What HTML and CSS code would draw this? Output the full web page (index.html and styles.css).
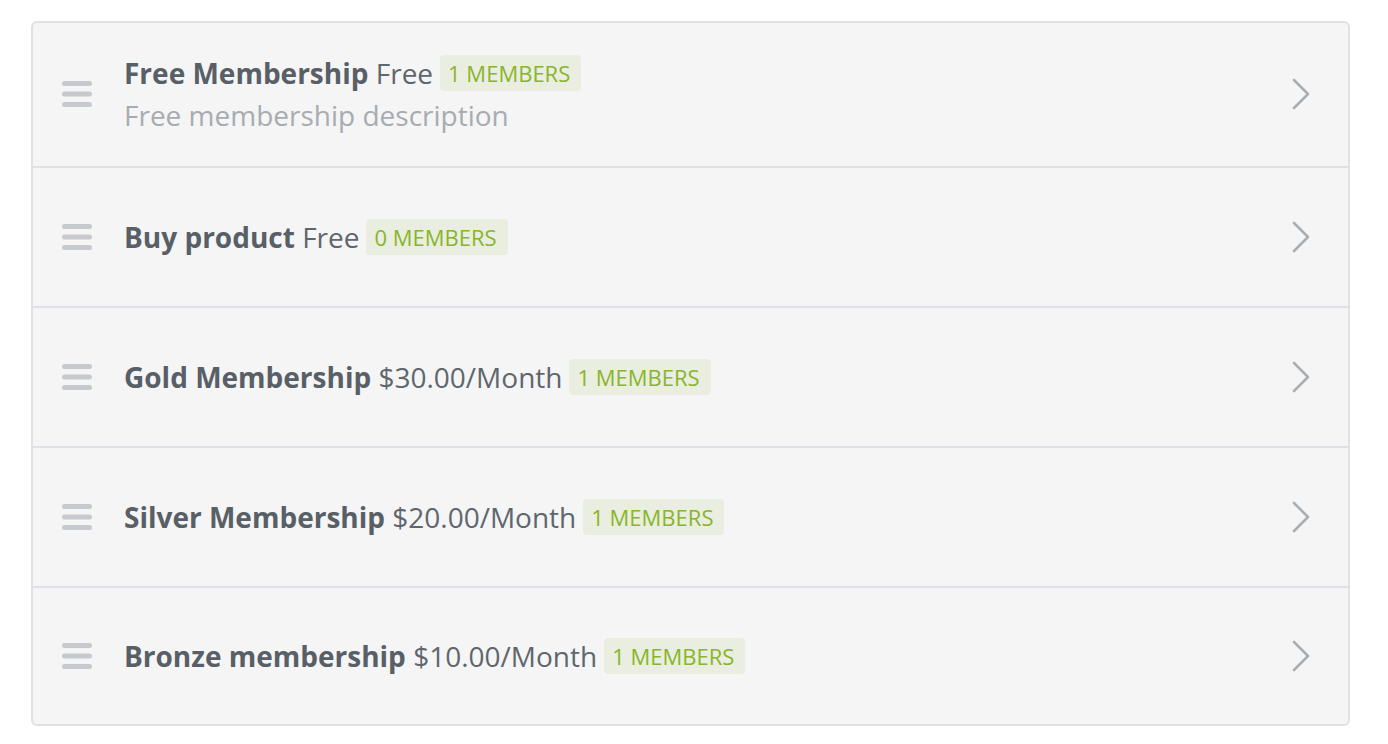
FILE: index.html
```html
<!DOCTYPE html>
<html lang="en">
<head>
<meta charset="utf-8">
<title>Memberships</title>
<link rel="stylesheet" href="styles.css">
</head>
<body>
<div class="list">
  <div class="row">
    <svg class="handle" viewBox="0 0 30 26" width="30" height="26"><rect x="0" y="0" width="30" height="5" rx="2.5"/><rect x="0" y="10.5" width="30" height="5" rx="2.5"/><rect x="0" y="21" width="30" height="5" rx="2.5"/></svg>
    <div class="info">
      <div class="title"><span class="name">Free Membership</span> <span class="price">Free</span><span class="badge">1 MEMBERS</span></div>
      <div class="desc">Free membership description</div>
    </div>
    <svg class="chev" viewBox="0 0 18 32" width="18" height="32"><path d="M2 2 L16 16 L2 30"/></svg>
  </div>
  <div class="row">
    <svg class="handle" viewBox="0 0 30 26" width="30" height="26"><rect x="0" y="0" width="30" height="5" rx="2.5"/><rect x="0" y="10.5" width="30" height="5" rx="2.5"/><rect x="0" y="21" width="30" height="5" rx="2.5"/></svg>
    <div class="info">
      <div class="title"><span class="name">Buy product</span> <span class="price">Free</span><span class="badge">0 MEMBERS</span></div>
    </div>
    <svg class="chev" viewBox="0 0 18 32" width="18" height="32"><path d="M2 2 L16 16 L2 30"/></svg>
  </div>
  <div class="row">
    <svg class="handle" viewBox="0 0 30 26" width="30" height="26"><rect x="0" y="0" width="30" height="5" rx="2.5"/><rect x="0" y="10.5" width="30" height="5" rx="2.5"/><rect x="0" y="21" width="30" height="5" rx="2.5"/></svg>
    <div class="info">
      <div class="title"><span class="name">Gold Membership</span> <span class="price">$30.00/Month</span><span class="badge">1 MEMBERS</span></div>
    </div>
    <svg class="chev" viewBox="0 0 18 32" width="18" height="32"><path d="M2 2 L16 16 L2 30"/></svg>
  </div>
  <div class="row">
    <svg class="handle" viewBox="0 0 30 26" width="30" height="26"><rect x="0" y="0" width="30" height="5" rx="2.5"/><rect x="0" y="10.5" width="30" height="5" rx="2.5"/><rect x="0" y="21" width="30" height="5" rx="2.5"/></svg>
    <div class="info">
      <div class="title"><span class="name">Silver Membership</span> <span class="price">$20.00/Month</span><span class="badge">1 MEMBERS</span></div>
    </div>
    <svg class="chev" viewBox="0 0 18 32" width="18" height="32"><path d="M2 2 L16 16 L2 30"/></svg>
  </div>
  <div class="row">
    <svg class="handle" viewBox="0 0 30 26" width="30" height="26"><rect x="0" y="0" width="30" height="5" rx="2.5"/><rect x="0" y="10.5" width="30" height="5" rx="2.5"/><rect x="0" y="21" width="30" height="5" rx="2.5"/></svg>
    <div class="info">
      <div class="title"><span class="name">Bronze membership</span> <span class="price">$10.00/Month</span><span class="badge">1 MEMBERS</span></div>
    </div>
    <svg class="chev" viewBox="0 0 18 32" width="18" height="32"><path d="M2 2 L16 16 L2 30"/></svg>
  </div>
</div>
</body>
</html>
```

FILE: styles.css
```css
* { box-sizing: border-box; }
html, body { margin: 0; padding: 0; background: #ffffff; }
body {
  font-family: "Open Sans", "Liberation Sans", sans-serif;
  padding: 21px 0 0 31px;
}
.list {
  width: 1319px;
  background: #f5f5f5;
  border: 2px solid #e1e0e6;
  border-radius: 6px;
  overflow: hidden;
}
.row {
  display: flex;
  align-items: center;
  min-height: 140px;
  padding: 29px 38px 30px 29px;
  border-bottom: 2px solid #e1e0e6;
}
.row:last-child { border-bottom: none; min-height: 136px; }
.handle { flex: none; fill: #c6c9ce; }
.info { flex: 1; margin-left: 32px; }
.title {
  font-size: 28px;
  line-height: 42px;
  color: #585f67;
}
.name { font-weight: 700; }
.price { font-weight: 400; color: #5f666e; }
.badge {
  display: inline-block;
  vertical-align: 2px;
  margin-left: 7px;
  padding: 0 11px 0 8px;
  height: 36px;
  line-height: 36px;
  font-size: 22px;
  color: #8ab52a;
  background: #e9eee0;
  border-radius: 4px;
}
.desc {
  font-size: 28px;
  line-height: 42px;
  color: #a7acb1;
}
.chev {
  flex: none;
  fill: none;
  stroke: #a9aeb3;
  stroke-width: 2.6;
  stroke-linecap: round;
  stroke-linejoin: round;
}
```
